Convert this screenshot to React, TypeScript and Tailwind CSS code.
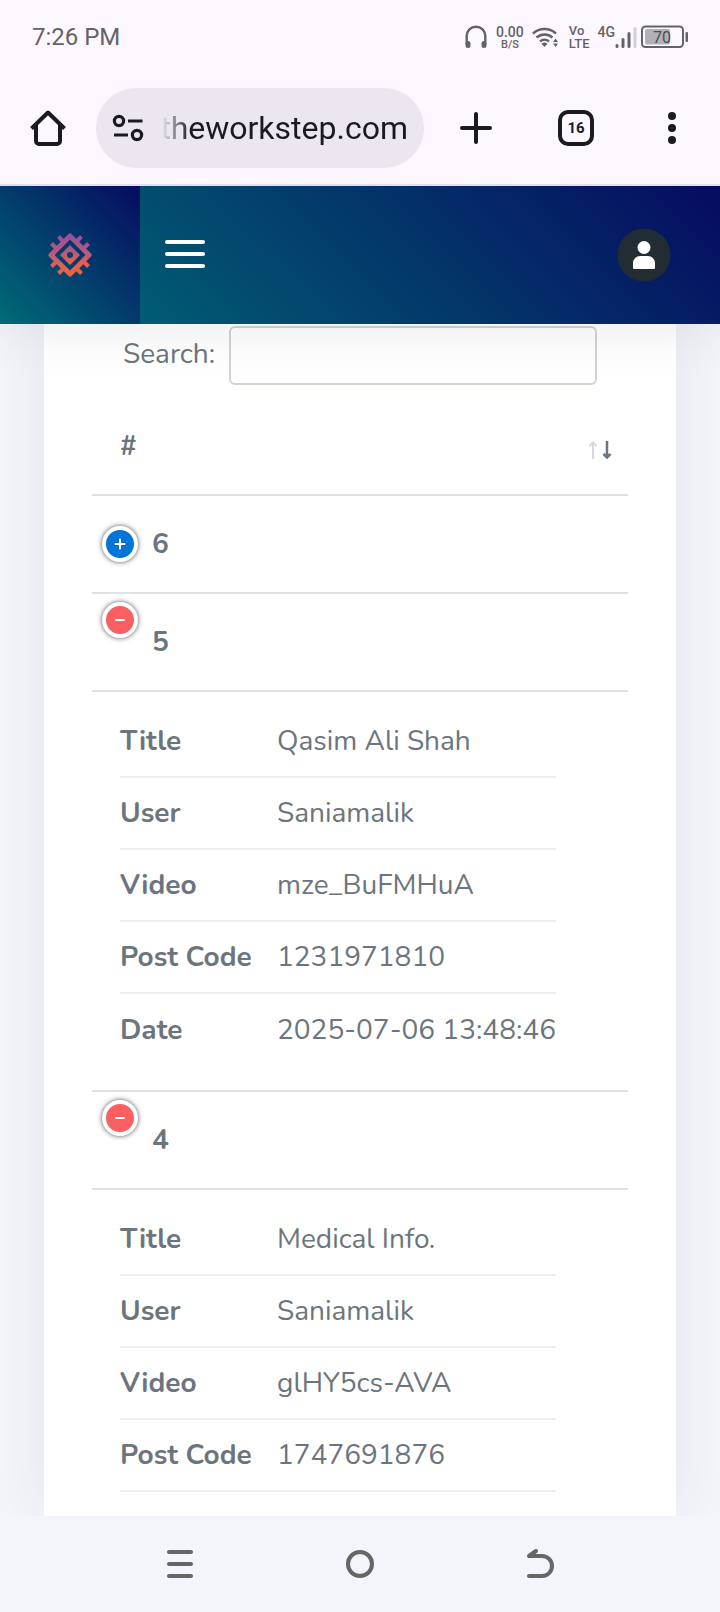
import type { ReactNode } from "react"

type Detail = { label: string; value: string }

const posts: { id: number; details: Detail[] }[] = [
  { id: 6, details: [] },
  {
    id: 5,
    details: [
      { label: "Title", value: "Qasim Ali Shah" },
      { label: "User", value: "Saniamalik" },
      { label: "Video", value: "mze_BuFMHuA" },
      { label: "Post Code", value: "1231971810" },
      { label: "Date", value: "2025-07-06 13:48:46" },
    ],
  },
  {
    id: 4,
    details: [
      { label: "Title", value: "Medical Info." },
      { label: "User", value: "Saniamalik" },
      { label: "Video", value: "glHY5cs-AVA" },
      { label: "Post Code", value: "1747691876" },
    ],
  },
]

function StatusBar() {
  return (
    <div className="flex h-[72px] items-center justify-between px-8 pt-[2px] text-[#656267]">
      <span className="text-2xl">7:26 PM</span>
      <div className="flex items-center">
        <svg className="h-6 w-6" viewBox="0 0 24 24" fill="none" stroke="currentColor">
          <path d="M2.700 19V11a9.300 9.300 0 0 1 18.600 0v8" strokeWidth="2.4" />
          <path d="M4 18.500v2M20 18.500v2" strokeWidth="5" strokeLinecap="round" />
        </svg>
        <div className="ml-2 text-center font-medium">
          <div className="text-sm leading-[14px]">0.00</div>
          <div className="text-[11px] leading-[11px]">B/S</div>
        </div>
        <svg className="ml-2 h-[22px] w-[27px]" viewBox="0 0 27 22" fill="none" stroke="currentColor" strokeWidth="2.4">
          <path d="M1 7.500a17 17 0 0 1 23 0" />
          <path d="M4.500 11.500a12 12 0 0 1 16 0" />
          <path d="M8 15.300a7 7 0 0 1 9 0" />
          <path d="M9.500 17.800a4.500 4.500 0 0 1 6 0L12.500 21z" fill="currentColor" stroke="none" />
          <path d="M23.500 12.500l2.500 3.500h-5zM23.500 21l2.500-3.500h-5z" fill="currentColor" stroke="none" />
        </svg>
        <div className="ml-[10px] text-[13px] leading-[13px] font-medium">
          <div>Vo</div>
          <div>LTE</div>
        </div>
        <div className="ml-2 flex items-start">
          <span className="text-sm leading-[14px] font-medium">4G</span>
          <svg className="h-6 w-[22px]" viewBox="0 0 22 24" stroke="currentColor" strokeWidth="3" strokeLinecap="round">
            <path d="M2 20.500v1M8 14.500v7M14 8.500v13" />
            <path d="M20 3.500v18" stroke="#d3cfd6" />
          </svg>
        </div>
        <svg className="ml-1 h-6 w-[47px]" viewBox="0 0 47 24">
          <rect x="1" y="1.500" width="41" height="20.500" rx="3.500" fill="none" stroke="currentColor" strokeWidth="2" />
          <rect x="4" y="4" width="25" height="15.500" rx="2" fill="#b3afb6" />
          <rect x="44.500" y="7" width="2.500" height="10" rx="1" fill="currentColor" />
          <text x="21" y="17.500" textAnchor="middle" fontSize="16" fill="#4d4a50">
            70
          </text>
        </svg>
      </div>
    </div>
  )
}

function BrowserBar() {
  return (
    <div className="flex h-[114px] items-center border-b-2 border-[#e4dfea] pl-[30px] text-[#1b1b1f]">
      <button aria-label="Home" className="shrink-0">
        <svg className="h-9 w-9" viewBox="0 0 36 36" fill="none" stroke="currentColor" strokeWidth="4">
          <path d="M1.500 18.500L18 2.500l16.500 16" strokeLinejoin="round" />
          <path d="M6 15v16a3 3 0 0 0 3 3h18a3 3 0 0 0 3-3V15" />
        </svg>
      </button>
      <div className="ml-[30px] flex h-20 min-w-0 flex-1 items-center rounded-full bg-[#ebe6ef] pr-4 pl-4">
        <svg className="h-7 w-8 shrink-0" viewBox="0 0 32 28" fill="none" stroke="currentColor" strokeWidth="3.200">
          <circle cx="7" cy="7" r="4.600" />
          <circle cx="25" cy="21" r="4.600" />
          <path d="M16 7h14.500M2 21h14" />
        </svg>
        <input
          aria-label="Address"
          readOnly
          value="theworkstep.com"
          className="ml-3 w-full min-w-0 bg-transparent text-right text-[32px] outline-none [mask-image:linear-gradient(to_right,transparent_6px,black_34px)]"
        />
      </div>
      <div className="flex shrink-0 items-center">
        <button aria-label="New tab" className="ml-9">
          <svg className="h-8 w-8" viewBox="0 0 32 32" stroke="currentColor" strokeWidth="4" strokeLinecap="round">
            <path d="M16 2v28M2 16h28" />
          </svg>
        </button>
        <button
          aria-label="Tabs"
          className="ml-[66px] flex h-9 w-9 items-center justify-center rounded-[10px] border-4 border-current text-[15px] font-bold"
        >
          16
        </button>
        <button aria-label="More" className="mr-9 ml-[66px]">
          <svg className="h-9 w-6" viewBox="0 0 24 36" fill="currentColor">
            <circle cx="12" cy="6" r="4" />
            <circle cx="12" cy="18" r="4" />
            <circle cx="12" cy="30" r="4" />
          </svg>
        </button>
      </div>
    </div>
  )
}

function Logo() {
  return (
    <svg className="h-11 w-11" viewBox="0 0 44 44" fill="none" stroke="url(#logo)">
      <defs>
        <linearGradient id="logo" gradientUnits="userSpaceOnUse" x1="22" y1="2" x2="22" y2="42">
          <stop offset="0" stopColor="#95509a" />
          <stop offset="0.500" stopColor="#c0597a" />
          <stop offset="0.750" stopColor="#e3614f" />
          <stop offset="1" stopColor="#e8643f" />
        </linearGradient>
        <linearGradient id="logoCore" x1="0" y1="0" x2="0" y2="1">
          <stop offset="0" stopColor="#9c5298" />
          <stop offset="1" stopColor="#ec6540" />
        </linearGradient>
      </defs>
      <path d="M22 3L41 22L22 41L3 22z" strokeWidth="5" strokeLinejoin="round" />
      <path
        d="M10.500 3.500L16 9M3.500 10.500L9 16M33.500 3.500L28 9M40.500 10.500L35 16M10.500 40.500L16 35M3.500 33.500L9 28M33.500 40.500L28 35M40.500 33.500L35 28"
        strokeWidth="4"
      />
      <path
        d="M22 12L32 22L22 32L12 22zM22 19a3 3 0 1 0 0 6a3 3 0 0 0 0-6z"
        fill="url(#logoCore)"
        fillRule="evenodd"
        stroke="none"
      />
    </svg>
  )
}

function SiteHeader() {
  return (
    <header className="relative z-10 flex h-[138px] items-center bg-[linear-gradient(45deg,#006c77,#060b60)] shadow-[0_8px_48px_rgba(60,70,60,0.1)]">
      <a
        href="#"
        aria-label="Dashboard"
        className="flex h-full w-[140px] items-center justify-center bg-[linear-gradient(45deg,#006c77,#060b60)]"
      >
        <Logo />
      </a>
      <button aria-label="Toggle menu" className="ml-[25px] flex flex-col gap-2 pb-[2px]">
        <span className="h-1 w-10 rounded-sm bg-white" />
        <span className="h-1 w-10 rounded-sm bg-white" />
        <span className="h-1 w-10 rounded-sm bg-white" />
      </button>
      <button aria-label="Account" className="mr-[49px] ml-auto">
        <svg className="h-[54px] w-[54px]" viewBox="0 0 54 54">
          <circle cx="27" cy="27" r="26.500" fill="#212d33" />
          <circle cx="27" cy="19.500" r="6.500" fill="#fff" />
          <path d="M16 40v-6a7 7 0 0 1 7-6h8a7 7 0 0 1 7 6v6a1 1 0 0 1-1 1H17a1 1 0 0 1-1-1z" fill="#fff" />
        </svg>
      </button>
    </header>
  )
}

function ToggleButton({ open }: { open: boolean }) {
  return (
    <button
      aria-label={open ? "Collapse row" : "Expand row"}
      className={
        open
          ? "mt-2 flex h-9 w-9 items-center justify-center self-start rounded-full border-4 border-white bg-[#fa5f62] shadow-[0_0_5px_#555]"
          : "flex h-9 w-9 items-center justify-center rounded-full border-4 border-white bg-[#0275d8] shadow-[0_0_5px_#555]"
      }
    >
      <svg className="h-3 w-3" viewBox="0 0 12 12" stroke="#fff" strokeWidth="2" strokeLinecap="round">
        <path d={open ? "M2 6h8" : "M6 1.500v9M1.500 6h9"} />
      </svg>
    </button>
  )
}

function Row({ id, open, children }: { id: number; open: boolean; children?: ReactNode }) {
  return (
    <>
      <tr className="border-b-2 border-[#dee2e6]">
        <td colSpan={2} className="p-0">
          <div className="flex h-24 items-center pl-[10px]">
            <ToggleButton open={open} />
            <span className="ml-[14px] font-bold">{id}</span>
          </div>
        </td>
      </tr>
      {children}
    </>
  )
}

export default function App() {
  return (
    <div className="flex min-h-screen flex-col bg-[#f4f5fa] font-[Roboto,sans-serif]">
      <div className="relative z-20 bg-[#fdf8ff]">
        <StatusBar />
        <BrowserBar />
      </div>

      <SiteHeader />

      <main className="flex flex-1 flex-col overflow-hidden px-11">
        <div className="flex-1 bg-white px-12 pt-[2px] font-[Nunito,Lato,sans-serif] text-[28px] leading-[42px] text-[#6c757d] shadow-[0_0_60px_rgba(50,55,60,0.08)]">
          <label className="flex items-center justify-center">
            <span className="pb-1">Search:</span>
            <input type="search" className="ml-[14px] h-[59px] w-[368px] rounded-md border-2 border-[#ced4da] px-4 outline-none" />
          </label>

          <table className="w-full border-collapse">
            <thead>
              <tr className="border-b-2 border-[#dee2e6]">
                <th className="h-[110px] pt-3 pl-7 text-left font-bold">#</th>
                <th className="pt-5 pr-4">
                  <button aria-label="Sort" className="ml-auto block">
                    <svg className="h-5 w-6" viewBox="0 0 24 20" fill="none" strokeWidth="2">
                      <path d="M5 19V2M1.500 6L5 2.500L8.500 6" stroke="#d6d8db" />
                      <path d="M19 1v17M15.500 14L19 17.500L22.500 14" stroke="#6c757d" strokeWidth="2.5" />
                    </svg>
                  </button>
                </th>
              </tr>
            </thead>
            <tbody>
              {posts.map((post) => (
                <Row key={post.id} id={post.id} open={post.details.length > 0}>
                  {post.details.length > 0 && (
                    <tr className="border-b-2 border-[#dee2e6] last:border-b-0">
                      <td colSpan={2} className="px-7 pt-[14px] pb-6">
                        <dl className="inline-block align-top">
                          {post.details.map((detail) => (
                            <div
                              key={detail.label}
                              className="flex h-[72px] w-[436px] items-center border-b-2 border-[#efefef] nth-5:border-b-0"
                            >
                              <dt className="w-[157px] font-bold">{detail.label}</dt>
                              <dd>{detail.value}</dd>
                            </div>
                          ))}
                        </dl>
                      </td>
                    </tr>
                  )}
                </Row>
              ))}
            </tbody>
          </table>
        </div>
      </main>

      <nav className="relative z-10 grid h-24 grid-cols-3 items-center justify-items-center bg-[#f4f5fa] px-[12.5%] text-[#666]">
        <button aria-label="Recent apps">
          <svg className="h-8 w-8" viewBox="0 0 32 32" stroke="currentColor" strokeWidth="4" strokeLinecap="round">
            <path d="M5 4h22M5 16h22M5 28h22" />
          </svg>
        </button>
        <button aria-label="Home screen">
          <svg className="h-8 w-8" viewBox="0 0 32 32" fill="none" stroke="currentColor" strokeWidth="4">
            <circle cx="16" cy="16" r="12" />
          </svg>
        </button>
        <button aria-label="Back">
          <svg
            className="h-8 w-8"
            viewBox="0 0 32 32"
            fill="none"
            stroke="currentColor"
            strokeWidth="4"
            strokeLinecap="round"
            strokeLinejoin="round"
          >
            <path d="M12 3L5 8h13a10 10 0 0 1 0 20H5" />
          </svg>
        </button>
      </nav>
    </div>
  )
}
